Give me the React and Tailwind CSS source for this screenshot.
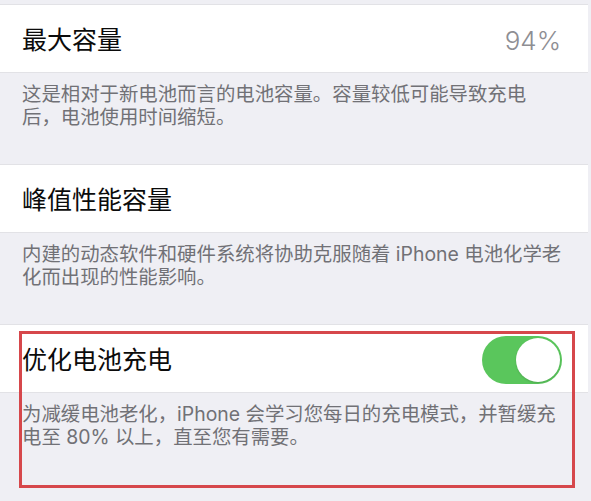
import React from "react";

const font = { fontFamily: 'Inter, "Noto Sans CJK SC", sans-serif' };

function Row({ title, right }) {
  return (
    <div className="h-[69px] w-[588px] bg-white border-y border-[#e2e2e6] flex items-center justify-between pl-[22px] pr-[27px]">
      <span className="text-[25px] text-[#0b0b0b] leading-none mt-[4px]">{title}</span>
      {right}
    </div>
  );
}

function Footer({ children }) {
  return (
    <div className="h-[91px] pt-[10px] pl-[22px] text-[19.4px] leading-[23px] text-[#717176] whitespace-nowrap">
      {children}
    </div>
  );
}

export default function App() {
  return (
    <div className="w-[591px] h-[501px] bg-[#efeff4] relative overflow-hidden" style={font}>
      <div className="h-[4px]" />
      <Row
        title="最大容量"
        right={<span className="text-[26px] text-[#8e8e93] leading-none font-light mt-[4px]">94%</span>}
      />
      <Footer>
        这是相对于新电池而言的电池容量。容量较低可能导致充电
        <br />
        后，电池使用时间缩短。
      </Footer>
      <Row title="峰值性能容量" />
      <Footer>
        内建的动态软件和硬件系统将协助克服随着 iPhone 电池化学老
        <br />
        化而出现的性能影响。
      </Footer>
      <div className="h-[69px] w-[588px] bg-white border-y border-[#e2e2e6] flex items-center justify-between pl-[22px] pr-[26px]">
        <span className="text-[25px] text-[#0b0b0b] leading-none mt-[4px]">优化电池充电</span>
        <div className="w-[80px] h-[48px] rounded-full bg-[#5ac65c] flex items-center justify-end p-[2px] mt-[3px]">
          <div className="w-[44px] h-[44px] rounded-full bg-white shadow-[0_1px_2px_rgba(0,0,0,0.15)]" />
        </div>
      </div>
      <Footer>
        为减缓电池老化，iPhone 会学习您每日的充电模式，并暂缓充
        <br />
        电至 80% 以上，直至您有需要。
      </Footer>
      <div className="absolute left-[19px] top-[331px] w-[556px] h-[157px] border-[3px] border-[#d6474b] pointer-events-none" />
    </div>
  );
}
